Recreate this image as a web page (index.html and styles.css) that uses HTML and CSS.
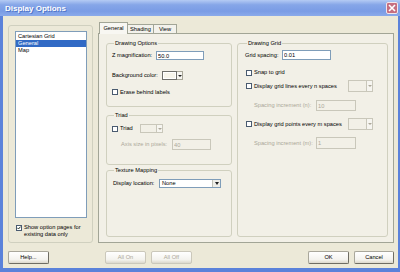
FILE: index.html
```html
<!DOCTYPE html>
<html lang="en">
  <head>
    <meta charset="UTF-8" />
    <title>Display Options</title>
    <link rel="stylesheet" href="styles.css">
  </head>
  <body>
    <div class="window">
      <!-- Title bar -->
      <div class="titlebar">
        <span class="title">Display Options</span>
        <span class="close">
          <svg width="8" height="8" viewBox="0 0 8 8"><path d="M1 1L7 7M7 1L1 7" stroke="#fff" stroke-width="1.6" /></svg>
        </span>
      </div>

      <div class="client">
        <div class="main">
          <!-- Option pages list -->
          <div class="sidebar">
            <ul class="pages">
              <li>Cartesian Grid</li>
              <li class="selected">General</li>
              <li>Map</li>
            </ul>
            <div class="check check-pages">
              <span class="cb checked">
                <svg width="4" height="4" viewBox="0 0 4 4"><path d="M0.4 1.8L1.5 3L3.6 0.6" stroke="#1f2f1f" stroke-width="1" fill="none" /></svg>
              </span>
              <span>Show option pages for existing data only</span>
            </div>
          </div>

          <!-- Tabs -->
          <div class="tabs">
            <div class="tab-strip">
              <span class="tab active">General</span>
              <span class="tab tab-shading">Shading</span>
              <span class="tab tab-view">View</span>
            </div>
            <div class="tab-page">
              <div class="col">
                <fieldset class="group group-options">
                  <legend>Drawing Options</legend>
                  <div class="row row-zmag">
                    <span class="lbl lbl-zmag">Z magnification:</span>
                    <input class="field field-zmag" type="text" value="50.0">
                  </div>
                  <div class="row row-bg">
                    <span class="lbl lbl-bg">Background color:</span>
                    <span class="colorpick">
                      <span class="swatch"></span>
                      <span class="drop"><i class="arrow"></i></span>
                    </span>
                  </div>
                  <div class="row row-erase check">
                    <span class="cb"></span>
                    <span>Erase behind labels</span>
                  </div>
                </fieldset>

                <fieldset class="group group-triad">
                  <legend>Triad</legend>
                  <div class="row row-triad check">
                    <span class="cb"></span>
                    <span class="lbl-triad">Triad</span>
                    <span class="colorpick disabled">
                      <span class="swatch"></span>
                      <span class="drop"><i class="arrow"></i></span>
                    </span>
                  </div>
                  <div class="row row-axis">
                    <span class="lbl lbl-axis disabled-text">Axis size in pixels:</span>
                    <input class="field field-axis" type="text" value="40" disabled>
                  </div>
                </fieldset>

                <fieldset class="group group-texture">
                  <legend>Texture Mapping</legend>
                  <div class="row row-location">
                    <span class="lbl lbl-location">Display location:</span>
                    <span class="combo">
                      <span class="combo-text">None</span>
                      <span class="combo-btn"><i class="arrow"></i></span>
                    </span>
                  </div>
                </fieldset>
              </div>

              <fieldset class="group group-grid">
                <legend>Drawing Grid</legend>
                <div class="row row-spacing">
                  <span class="lbl lbl-spacing">Grid spacing:</span>
                  <input class="field field-spacing" type="text" value="0.01">
                </div>
                <div class="row row-snap check">
                  <span class="cb"></span>
                  <span>Snap to grid</span>
                </div>
                <div class="row row-lines check">
                  <span class="cb"></span>
                  <span>Display grid lines every n spaces</span>
                  <span class="colorpick disabled push">
                    <span class="swatch"></span>
                    <span class="drop"><i class="arrow"></i></span>
                  </span>
                </div>
                <div class="row row-inc-n">
                  <span class="lbl lbl-inc disabled-text">Spacing increment (n):</span>
                  <input class="field field-inc" type="text" value="10" disabled>
                </div>
                <div class="row row-points check">
                  <span class="cb"></span>
                  <span>Display grid points every m spaces</span>
                  <span class="colorpick disabled push">
                    <span class="swatch"></span>
                    <span class="drop"><i class="arrow"></i></span>
                  </span>
                </div>
                <div class="row row-inc-m">
                  <span class="lbl lbl-inc disabled-text">Spacing increment (m):</span>
                  <input class="field field-inc" type="text" value="1" disabled>
                </div>
              </fieldset>
            </div>
          </div>
        </div>

        <!-- Dialog buttons -->
        <div class="buttons">
          <button class="btn">Help...</button>
          <button class="btn btn-allon" disabled>All On</button>
          <button class="btn" disabled>All Off</button>
          <button class="btn btn-ok">OK</button>
          <button class="btn btn-cancel">Cancel</button>
        </div>
      </div>
    </div>
  </body>
</html>
```

FILE: styles.css
```css
/* General Reset */
* {
  margin: 0;
  padding: 0;
  box-sizing: border-box;
}

body,
html {
  width: 400px;
  height: 272px;
  overflow: hidden;
  font-family: "Liberation Sans", Arial, sans-serif;
  font-size: 5.7px;
  line-height: 7px;
  color: #000;
}

/* Window frame */
.window {
  width: 400px;
  height: 272px;
  display: flex;
  flex-direction: column;
  background: #5b82da;
}

.titlebar {
  height: 16px;
  display: flex;
  align-items: center;
  padding: 1px 2px 0 5px;
  background: linear-gradient(to bottom, #b4cbf4 0%, #86a6e8 30%, #7a9ce5 70%, #8aaaea 100%);
}

.title {
  flex: 1;
  color: #fff;
  font-size: 8px;
  font-weight: bold;
  line-height: 10px;
  text-shadow: 1px 1px 0 #4f74c8;
}

.close {
  width: 12px;
  height: 12px;
  margin-top: -1px;
  display: flex;
  align-items: center;
  justify-content: center;
  background: #c66e80;
  border: 1px solid #f2e6ea;
  border-radius: 2px;
}

.client {
  flex: 1;
  margin: 0 2px 4px 3px;
  padding: 6px 4px 4px 5px;
  background: #ece9d8;
  display: flex;
  flex-direction: column;
}

.main {
  height: 221px;
  display: flex;
  gap: 5px;
}

/* Sidebar list */
.sidebar {
  width: 85px;
  margin-top: 3px;
  padding: 5px 5px 0 6px;
  border: 1px solid #d0d0bf;
  border-radius: 3px;
}

.pages {
  height: 187px;
  list-style: none;
  padding-top: 1px;
  background: #fff;
  border: 1px solid #7f9db9;
}

.pages li {
  padding-left: 2px;
  height: 7px;
}

.pages li.selected {
  background: #316ac5;
  color: #fff;
}

.check {
  display: flex;
  align-items: center;
  gap: 2px;
}

.check-pages {
  margin-top: 6px;
  padding-left: 1px;
  align-items: flex-start;
}

.check-pages .cb {
  margin-top: 1px;
}

.cb {
  flex: none;
  width: 6px;
  height: 6px;
  background: #fff;
  border: 1px solid #4a5b70;
  display: flex;
  align-items: center;
  justify-content: center;
}

/* Tabs */
.tabs {
  flex: 1;
  display: flex;
  flex-direction: column;
}

.tab-strip {
  height: 11px;
  display: flex;
  align-items: flex-end;
  padding-left: 1px;
}

.tab {
  height: 9px;
  width: 26px;
  text-align: center;
  line-height: 8px;
  border: 1px solid #a2a596;
  border-bottom: none;
  background: #f3f2ec;
}

.tab.active {
  position: relative;
  z-index: 1;
  width: 29px;
  height: 12px;
  margin-bottom: -1px;
  line-height: 10px;
  background: #f8f7f2;
}

.tab-shading {
  width: 26px;
  border-left: none;
}

.tab-view {
  width: 23px;
  border-left: none;
}

.tab-page {
  height: 210px;
  display: flex;
  gap: 5px;
  padding: 6px 5px 5px 7px;
  border: 1px solid #a2a596;
  background: #f2f0e7;
}

.col {
  width: 126px;
  display: flex;
  flex-direction: column;
}

/* Group boxes */
.group {
  border: 1px solid #d0d0bf;
  border-radius: 3px;
  padding: 0 5px;
}

.group legend {
  margin-left: 2px;
  padding: 0 1px;
  line-height: 7px;
}

.group-options {
  height: 67px;
}

.group-triad {
  height: 53px;
  margin-top: 5px;
}

.group-texture {
  height: 70px;
  margin-top: 2px;
}

.group-grid {
  width: 151px;
  height: 197px;
  padding: 0 14px 0 7px;
}

.row {
  display: flex;
  align-items: center;
}

.lbl {
  flex: none;
}

.disabled-text {
  color: #aca899;
}

.field {
  height: 100%;
  padding: 0 1px;
  font: inherit;
  border: 1px solid #7f9db9;
  background: #fff;
  outline: none;
}

.field:disabled {
  color: #aca899;
  border-color: #c9c7ba;
  background: #f2f0e7;
}

/* Drawing Options rows */
.row-zmag {
  height: 9px;
  margin-top: 4px;
}

.lbl-zmag {
  width: 44px;
}

.field-zmag {
  width: 48px;
}

.row-bg {
  height: 9px;
  margin-top: 11px;
}

.lbl-bg {
  width: 50px;
}

.row-erase {
  height: 6px;
  margin-top: 9px;
}

.colorpick {
  flex: none;
  width: 21px;
  height: 100%;
  display: flex;
}

.colorpick .swatch {
  flex: 1;
  border: 1px solid #6f6f6a;
  background: #f6f4ea;
  box-shadow: inset 0 0 0 1px #fff;
}

.colorpick .drop {
  width: 6px;
  border: 1px solid #a8a698;
  border-left: none;
  background: #f6f5f0;
  display: flex;
  align-items: center;
  justify-content: center;
}

.colorpick.disabled .swatch {
  border-color: #c9c7ba;
  background: #f2f0e7;
  box-shadow: none;
}

.colorpick.disabled .drop {
  border-color: #c9c7ba;
}

.colorpick.disabled .arrow {
  border-top-color: #aca899;
}

.arrow {
  width: 0;
  height: 0;
  border-left: 2px solid transparent;
  border-right: 2px solid transparent;
  border-top: 2px solid #222;
}

/* Triad rows */
.row-triad {
  height: 9px;
  margin-top: 5px;
}

.lbl-triad {
  width: 18px;
}

.row-triad .colorpick {
  width: 23px;
}

.row-axis {
  height: 11px;
  margin-top: 6px;
  padding-left: 9px;
}

.lbl-axis {
  width: 51px;
}

.field-axis {
  width: 39px;
}

/* Texture rows */
.row-location {
  height: 9px;
  margin-top: 5px;
  padding-left: 1px;
}

.lbl-location {
  width: 46px;
}

.combo {
  width: 62px;
  height: 100%;
  display: flex;
  border: 1px solid #7f9db9;
  background: #fff;
}

.combo-text {
  flex: 1;
  padding-left: 2px;
}

.combo-btn {
  width: 8px;
  margin: 0;
  border-left: 1px solid #c3c3b8;
  background: #efeee8;
  display: flex;
  align-items: center;
  justify-content: center;
}

.combo-btn .arrow {
  border-left-width: 2px;
  border-right-width: 2px;
  border-top-width: 3px;
}

/* Drawing Grid rows */
.row-spacing {
  height: 10px;
  margin-top: 3px;
}

.lbl-spacing {
  width: 37px;
}

.field-spacing {
  width: 49px;
}

.row-snap {
  height: 7px;
  margin-top: 9px;
  padding-left: 1px;
}

.row-lines,
.row-points {
  height: 12px;
  padding-left: 1px;
}

.row-lines {
  margin-top: 4px;
}

.row-points {
  margin-top: 7px;
}

.push {
  width: 25px;
  margin-left: auto;
}

.row-inc-n,
.row-inc-m {
  padding-left: 9px;
}

.row-inc-n {
  height: 11px;
  margin-top: 8px;
}

.row-inc-m {
  height: 12px;
  margin-top: 7px;
}

.lbl-inc {
  width: 62px;
}

.field-inc {
  width: 40px;
}

/* Dialog buttons */
.buttons {
  height: 13px;
  margin-top: 8px;
  display: flex;
  gap: 5px;
}

.btn {
  width: 41px;
  height: 13px;
  font: inherit;
  color: #000;
  border: 1px solid #a9a79b;
  border-right-color: #6f6d63;
  border-bottom-color: #6f6d63;
  border-radius: 2px;
  background: linear-gradient(to bottom, #ffffff 0%, #f4f3ee 70%, #dcd8cc 100%);
}

.btn:disabled {
  color: #aca899;
  border-color: #cbc8bb;
}

.btn-allon {
  margin-left: 51px;
}

.btn-ok {
  margin-left: auto;
}

.btn-cancel {
  width: 40px;
}
```
